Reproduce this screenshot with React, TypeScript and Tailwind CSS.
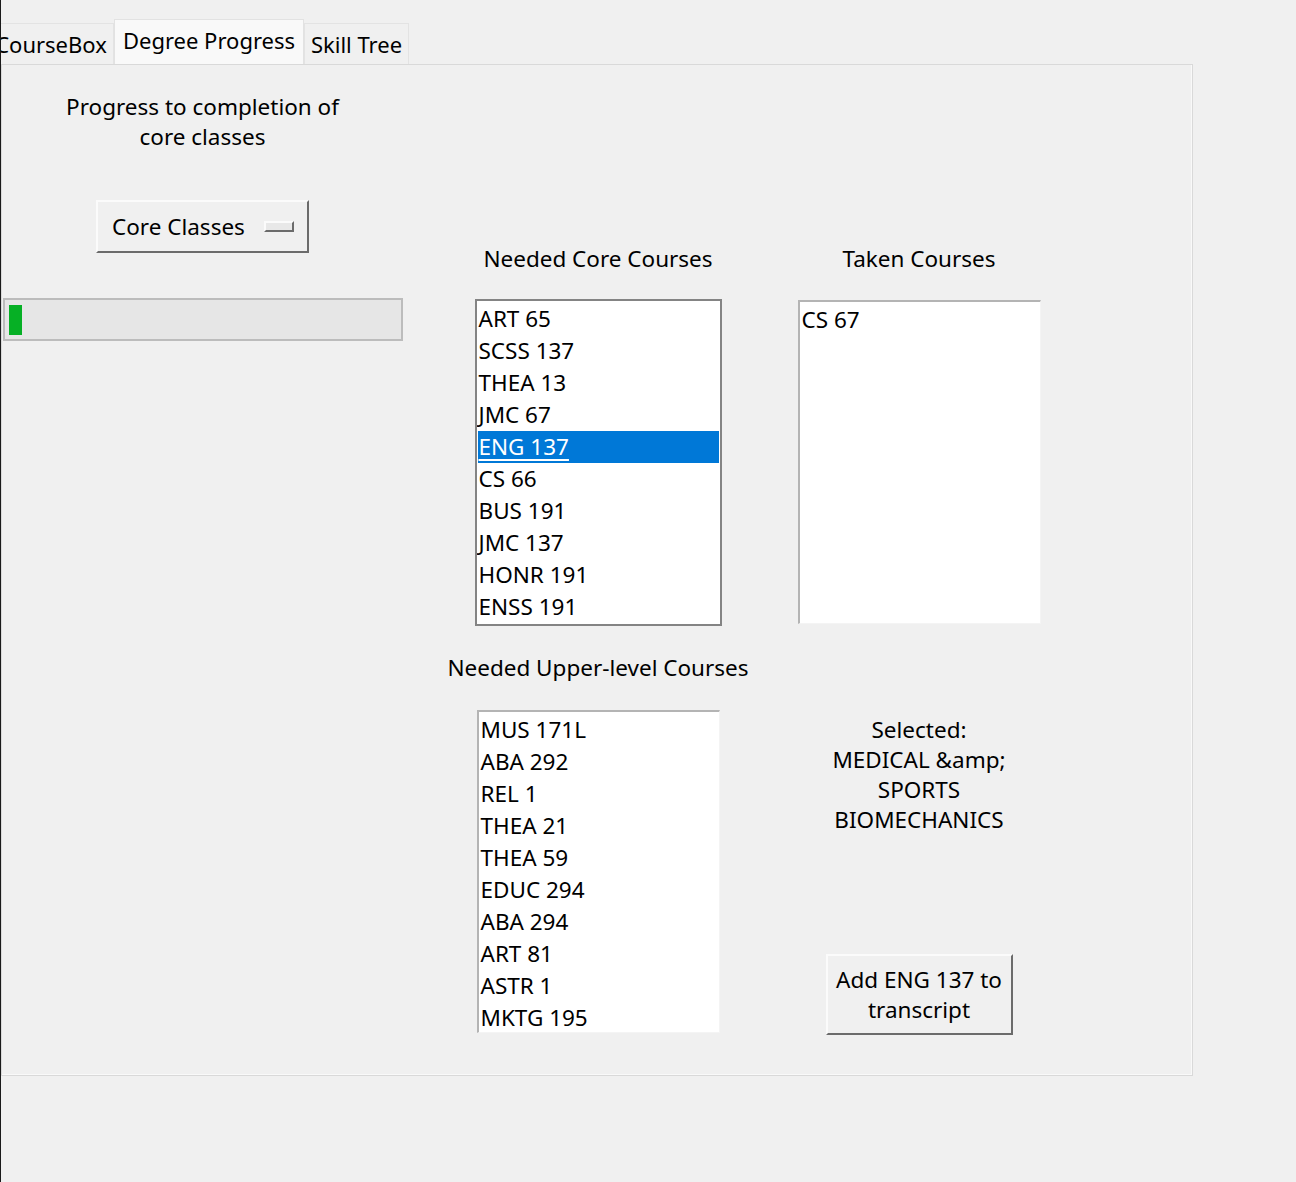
const coreCourses = [
  "ART 65",
  "SCSS 137",
  "THEA 13",
  "JMC 67",
  "ENG 137",
  "CS 66",
  "BUS 191",
  "JMC 137",
  "HONR 191",
  "ENSS 191",
];

const upperCourses = [
  "MUS 171L",
  "ABA 292",
  "REL 1",
  "THEA 21",
  "THEA 59",
  "EDUC 294",
  "ABA 294",
  "ART 81",
  "ASTR 1",
  "MKTG 195",
];

const takenCourses = ["CS 67"];

const Listbox = ({
  items,
  selected,
  focused,
  className,
}: {
  items: string[];
  selected?: string;
  focused?: boolean;
  className: string;
}) => (
  <div
    className={
      "bg-white overflow-hidden px-px pt-[2px] " +
      (focused
        ? "border-2 border-[#848484] "
        : "border-t-2 border-l-2 border-b border-r border-t-[#b4b4b4] border-l-[#b4b4b4] border-b-[#f4f4f4] border-r-[#f4f4f4] ") +
      className
    }
  >
    {items.map((item) => (
      <div
        key={item}
        className={
          "pl-[1px] text-[22.5px] leading-[32px] whitespace-nowrap " +
          (item === selected ? "bg-[#0078d7] text-white" : "text-black")
        }
      >
        <span className={item === selected ? "underline underline-offset-4" : ""}>{item}</span>
      </div>
    ))}
  </div>
);

const Tab = ({ label, active, className }: { label: string; active?: boolean; className: string }) => (
  <div
    className={
      "flex items-center justify-center border border-b-0 text-[22px] " +
      (active ? "bg-[#f9f9f9] border-[#e2e2e2] h-[45px] pb-[4px]" : "bg-[#f0f0f0] border-[#e3e3e3] h-[41px]") +
      " " +
      className
    }
  >
    {label}
  </div>
);

export default function App() {
  return (
    <div
      className="w-[1296px] h-[1182px] bg-[#f0f0f0] border-l border-[#1a1a1a] overflow-hidden text-black"
      style={{ fontFamily: '"Noto Sans", "Open Sans", sans-serif' }}
    >
      <div className="flex items-end h-[64px]">
        <Tab label="CourseBox" className="w-[126px] ml-[-13px]" />
        <Tab label="Degree Progress" active className="w-[190px]" />
        <Tab label="Skill Tree" className="w-[105px]" />
      </div>

      <div className="w-[1192px] h-[1012px] border border-[#d9d9d9] shadow-[inset_-1px_-1px_0_#f9f9f9] flex">
        {/* left column */}
        <div className="w-[401px] flex flex-col items-center">
          <div className="pt-[27px] text-[22.5px] leading-[30px] text-center">
            Progress to completion of
            <br />
            core classes
          </div>
          <div className="mt-[48px] w-[213px] h-[53px] flex items-center justify-between pl-[14px] pr-[13px] border-2 border-t-[#fbfbfb] border-l-[#fbfbfb] border-b-[#6b6b6b] border-r-[#6b6b6b] text-[22.5px]">
            <span>Core Classes</span>
            <span className="w-[30px] h-[11px] border-2 border-t-[#fbfbfb] border-l-[#fbfbfb] border-b-[#6b6b6b] border-r-[#6b6b6b] bg-[#e8e8e8]" />
          </div>
          <div className="mt-[45px] self-start ml-[1px] w-[400px] h-[43px] border-2 border-[#bcbcbc] bg-[#e6e6e6] pt-[5px] pl-[4px]">
            <div className="w-[13px] h-[30px] bg-[#06b025]" />
          </div>
        </div>

        {/* needed courses column */}
        <div className="ml-[36px] w-[318px] flex flex-col items-center">
          <div className="pt-[179px] text-[22.5px] leading-[30px]">Needed Core Courses</div>
          <Listbox items={coreCourses} selected="ENG 137" focused className="mt-[25px] w-[247px] h-[327px]" />
          <div className="mt-[27px] text-[22.5px] leading-[30px]">Needed Upper-level Courses</div>
          <Listbox items={upperCourses} className="mt-[27px] w-[243px] h-[323px]" />
        </div>

        {/* taken column */}
        <div className="ml-[22px] w-[280px] flex flex-col items-center">
          <div className="pt-[179px] text-[22.5px] leading-[30px]">Taken Courses</div>
          <Listbox items={takenCourses} className="mt-[26px] w-[243px] h-[324px]" />
          <div className="mt-[91px] text-[22.5px] leading-[30px] text-center">
            Selected:
            <br />
            MEDICAL &amp;amp;
            <br />
            SPORTS
            <br />
            BIOMECHANICS
          </div>
          <div className="mt-[119px] w-[187px] h-[81px] flex items-center justify-center text-center text-[22.5px] leading-[30px] border-2 border-t-[#fbfbfb] border-l-[#fbfbfb] border-b-[#6b6b6b] border-r-[#6b6b6b]">
            Add ENG 137 to
            <br />
            transcript
          </div>
        </div>
      </div>
    </div>
  );
}
